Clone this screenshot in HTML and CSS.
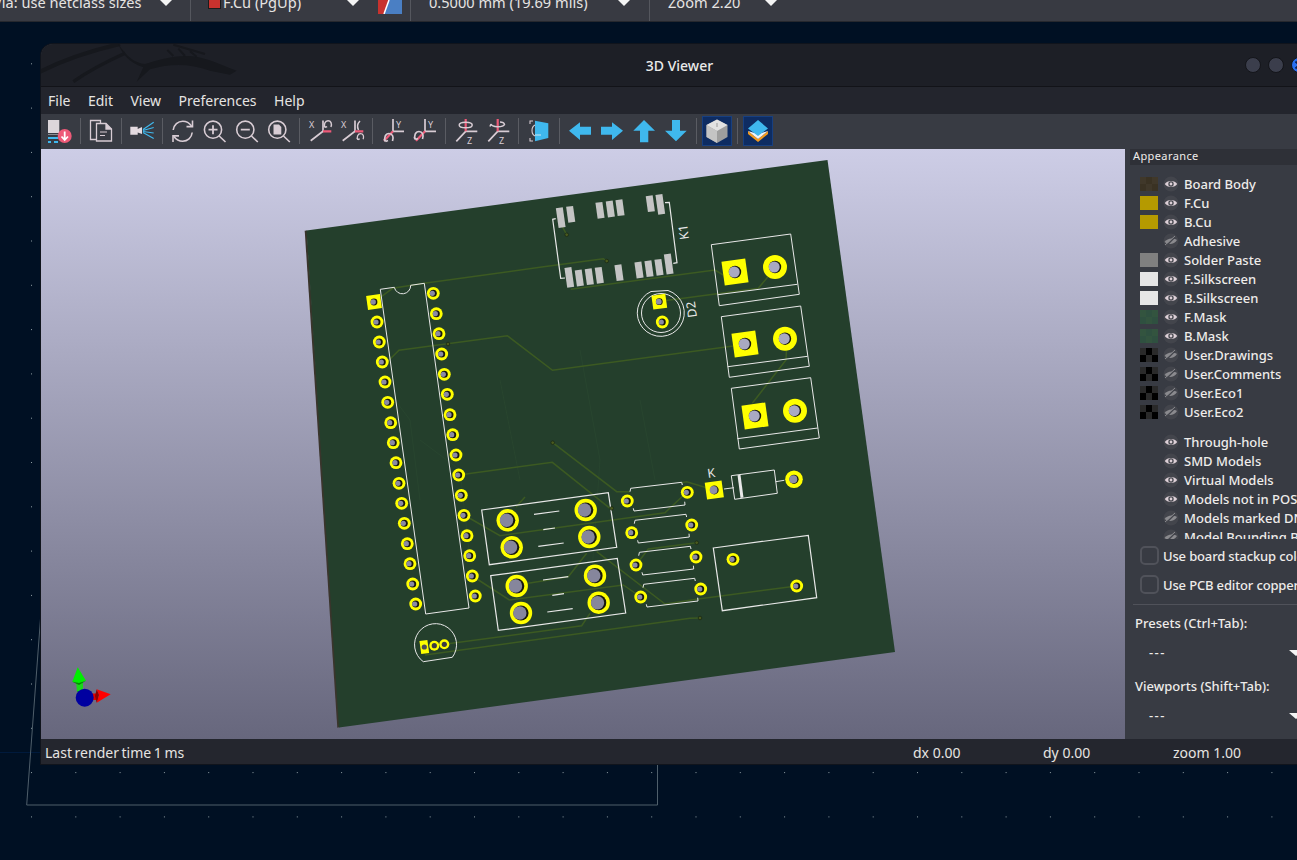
FILE: index.html

```html
<!DOCTYPE html>
<html lang="en">
<head>
  <meta charset="UTF-8" />
  <title>3D Viewer</title>
  <link rel="stylesheet" href="styles.css">
</head>
<body>

  <!-- shared symbols -->
  <svg class="defs" width="0" height="0">
    <symbol id="eye" viewBox="0 0 16 16">
      <circle cx="8" cy="8" r="7.5" fill="#43454c"/>
      <path d="M1.8 8C4 4 12 4 14.2 8 12 12 4 12 1.8 8Z" fill="#dccfd6"/>
      <circle cx="8" cy="8" r="2.7" fill="#43454c"/>
      <circle cx="8" cy="8" r="1.4" fill="#dccfd6"/>
    </symbol>
    <symbol id="eye-off" viewBox="0 0 16 16">
      <circle cx="8" cy="8" r="7.5" fill="#43454c"/>
      <path d="M1.5 9C4 5.2 10 4.4 14 7 11.5 11.5 5 12 1.5 9Z" fill="#8a8a8e"/>
      <path d="M3 13L13 3" stroke="#43454c" stroke-width="1.6"/>
      <path d="M2 12L12 3" stroke="#8a8a8e" stroke-width="1"/>
    </symbol>
    <symbol id="rot-arrow" viewBox="0 0 12 12" overflow="visible">
      <path d="M2.5 9.5C.5 6 2.5 1.5 6 1.5S11 5 9.5 9M2.5 9.5L1 7M2.5 9.5L5 8.5" fill="none" stroke="#d8ccd4" stroke-width="1.7"/>
    </symbol>
  </svg>

  <!-- pcb editor behind the viewer -->
  <svg class="backdrop" width="1297" height="860">
    <defs>
      <pattern id="griddots" x="31" y="19" width="44.3" height="44.3" patternUnits="userSpaceOnUse">
        <rect width="1" height="1" fill="#8f9ea4"/>
      </pattern>
    </defs>
    <rect width="1297" height="860" fill="url(#griddots)"/>
    <path d="M0 752.5H41" stroke="#001a3c" stroke-width="1"/>
    <path d="M41 612L26.7 805H657.5V764" fill="none" stroke="#4f5f6b" stroke-width="1"/>
  </svg>

  <div class="topbar">
    <div class="combo combo-via"><span>Via: use netclass sizes</span><i class="arrow"></i></div>
    <div class="combo combo-layer"><b class="layer-chip"></b><span>F.Cu (PgUp)</span><i class="arrow"></i></div>
    <svg class="layer-pair" width="24" height="14" viewBox="0 0 24 14">
      <rect width="24" height="14" fill="#4a7fc4"/>
      <path d="M0 0H11L6 14H0Z" fill="#c8322e"/>
      <path d="M11 0L6 14" stroke="#fff" stroke-width="1.5"/>
    </svg>
    <div class="combo combo-track"><span>0.5000 mm (19.69 mils)</span><i class="arrow"></i></div>
    <div class="combo combo-zoom"><span>Zoom 2.20</span><i class="arrow"></i></div>
  </div>

  <div class="window">
    <div class="titlebar">
      <svg class="dragon" width="230" height="50" viewBox="0 0 690 150">
        <path d="M30 95C110 55 190 30 270 12" fill="none" stroke="#16181d" stroke-width="12"/>
        <path d="M130 125C180 90 230 65 285 40" fill="none" stroke="#16181d" stroke-width="10"/>
        <path d="M265 12C290 50 315 70 345 72 380 62 420 48 470 48 520 48 560 70 620 92L600 104 540 92C480 70 420 70 360 88L320 125 340 82C300 70 275 40 265 12Z" fill="#16181d"/>
        <path d="M412 30L430 48M445 26L465 48M480 34L500 50M430 14L525 42" fill="none" stroke="#16181d" stroke-width="6"/>
      </svg>
      <span class="title">3D Viewer</span>
      <div class="controls">
        <i class="ctl"></i><i class="ctl"></i>
        <i class="ctl ctl-close">
          <svg width="14" height="14" viewBox="0 0 14 14"><path d="M3.5 3.5L10.5 10.5M10.5 3.5L3.5 10.5" stroke="#10204a" stroke-width="1.8"/></svg>
        </i>
      </div>
    </div>

    <div class="menubar">
      <span>File</span><span>Edit</span><span>View</span><span>Preferences</span><span>Help</span>
    </div>

    <div class="toolbar">
      <button class="tool">
        <svg viewBox="0 0 32 34">
          <path d="M4 6H15.3V19H4Z" fill="#dcd6da"/>
          <path d="M4 20H15.3V21H4Z" fill="#8a8a90"/>
          <path d="M4 23H14V25H4ZM4 27H7V29H4ZM10 27H14V29H10Z" fill="#3fb8ee"/>
          <circle cx="20.7" cy="22" r="7" fill="#ee5a78"/>
          <path d="M20.7 17.5V26M17.5 22.5L20.7 26 24 22.5" fill="none" stroke="#fff" stroke-width="1.8"/>
        </svg>
      </button>
      <i class="sep"></i>
      <button class="tool">
        <svg viewBox="0 0 32 34" fill="none" stroke="#d8ccd4" stroke-width="1.3">
          <path d="M11 25.5H5.5V6.5H15.5V9"/>
          <path d="M11.5 9.5H21L26.5 15V27H11.5Z"/>
          <path d="M21 9.5V15H26.5" fill="#d8ccd4"/>
          <path d="M15 18H22M15 21.5H20" stroke-width="1.1"/>
        </svg>
      </button>
      <i class="sep"></i>
      <button class="tool">
        <svg viewBox="0 0 32 34">
          <path d="M4.3 12.7H11.7V15L16 13V20L11.7 18.5V20.7H4.3Z" fill="#e4dae0"/>
          <path d="M17 15.5L27.7 8.3M17 16.5L27.7 13.5M17 17.5L27.7 19M17 18.5L27.7 24.5" stroke="#3fb8ee" stroke-width="1.2" fill="none"/>
        </svg>
      </button>
      <i class="sep"></i>
      <button class="tool">
        <svg viewBox="0 0 32 34" fill="none" stroke="#d8ccd4" stroke-width="1.6">
          <path d="M6.2 16C6.8 10.5 11 7.2 15.7 7.2 19.5 7.2 22.5 9 24.5 12M25.2 18.5C24.6 24 20.5 27.3 15.7 27.3 12 27.3 9 25.5 7 22.5"/>
          <path d="M25.5 6.5V12.6H19.5M6 28V21.9H12"/>
        </svg>
      </button>
      <button class="tool">
        <svg viewBox="0 0 32 34" fill="none" stroke="#d8ccd4" stroke-width="1.6">
          <circle cx="14" cy="15.7" r="8.6"/>
          <path d="M20.2 22L26.5 28"/>
          <path d="M14 11.2V20.2M9.5 15.7H18.5" stroke-width="1.8"/>
        </svg>
      </button>
      <button class="tool">
        <svg viewBox="0 0 32 34" fill="none" stroke="#d8ccd4" stroke-width="1.6">
          <circle cx="14.3" cy="15.7" r="8.6"/>
          <path d="M20.5 22L26.8 28"/>
          <path d="M9.8 15.7H18.8" stroke-width="1.8"/>
        </svg>
      </button>
      <button class="tool">
        <svg viewBox="0 0 32 34" fill="none" stroke="#d8ccd4" stroke-width="1.6">
          <circle cx="14.3" cy="15.7" r="8.6"/>
          <path d="M20.5 22L26.8 28"/>
          <path d="M10.5 10.5H16L18.3 13V20.5H10.5Z" fill="#d8ccd4" stroke="none"/>
        </svg>
      </button>
      <i class="sep"></i>
      <button class="tool">
        <svg viewBox="0 0 32 34" fill="none" stroke="#d8ccd4" stroke-width="1.7">
          <path d="M6.7 26.7L19 17.3V6.5"/>
          <path d="M19 17.3H27.3" stroke="#ee5a78" stroke-width="2.2"/>
          <text x="5" y="14" class="axis">X</text>
          <use href="#rot-arrow" x="19" y="5.5" width="10" height="10"/>
        </svg>
      </button>
      <button class="tool">
        <svg viewBox="0 0 32 34" fill="none" stroke="#d8ccd4" stroke-width="1.7">
          <path d="M6.7 26.7L19 17.3V6.5"/>
          <path d="M19 17.3H27.3" stroke="#ee5a78" stroke-width="2.2"/>
          <text x="5" y="14" class="axis">X</text>
          <use href="#rot-arrow" x="20" y="18.5" width="9" height="9"/>
          <path d="M24 7C21 10 21 13 22.5 16" stroke-width="1.5"/>
        </svg>
      </button>
      <i class="sep"></i>
      <button class="tool">
        <svg viewBox="0 0 32 34" fill="none" stroke="#d8ccd4" stroke-width="1.7">
          <path d="M16 5V17.3H27"/>
          <path d="M16 17.3L7 26.7" stroke="#ee5a78" stroke-width="2.2"/>
          <text x="19" y="14" class="axis">Y</text>
          <use href="#rot-arrow" x="6" y="18" width="12" height="12"/>
        </svg>
      </button>
      <button class="tool">
        <svg viewBox="0 0 32 34" fill="none" stroke="#d8ccd4" stroke-width="1.7">
          <path d="M16 5V17.3H27"/>
          <path d="M16 17.3L7 26.7" stroke="#ee5a78" stroke-width="2.2"/>
          <text x="19" y="14" class="axis">Y</text>
          <use href="#rot-arrow" x="4" y="16" width="12" height="12"/>
        </svg>
      </button>
      <i class="sep"></i>
      <button class="tool">
        <svg viewBox="0 0 32 34" fill="none" stroke="#d8ccd4" stroke-width="1.7">
          <path d="M6.3 27.3L15.7 17.3H27.3"/>
          <path d="M15.7 5V17.3" stroke="#ee5a78" stroke-width="2.2"/>
          <text x="17" y="30" class="axis">Z</text>
          <ellipse cx="15.7" cy="11" rx="6.5" ry="2.8" stroke-width="1.5"/>
        </svg>
      </button>
      <button class="tool">
        <svg viewBox="0 0 32 34" fill="none" stroke="#d8ccd4" stroke-width="1.7">
          <path d="M6.3 27.3L15.7 17.3H27.3"/>
          <path d="M15.7 5V17.3" stroke="#ee5a78" stroke-width="2.2"/>
          <text x="17" y="30" class="axis">Z</text>
          <path d="M9 10C10 13.5 21 13.5 22.5 10.5 22 8.5 19 8 18 8M9 10L8 12.5" stroke-width="1.5"/>
        </svg>
      </button>
      <i class="sep"></i>
      <button class="tool">
        <svg viewBox="0 0 32 34">
          <path d="M7 10V7H10M7 24V27H10" fill="none" stroke="#d8ccd4" stroke-width="1.1"/>
          <path d="M12 6.7L25.3 9.3V24L12 27.3Z" fill="#3fb8ee"/>
          <path d="M12 11C8 13 8 20 12 22" fill="none" stroke="#d8ccd4" stroke-width="1.1"/>
          <path d="M12 21H18" stroke="#cfeaf6" stroke-width="1"/>
        </svg>
      </button>
      <i class="sep"></i>
      <button class="tool">
        <svg viewBox="0 0 32 34"><path d="M5 16.7L16 8.3V12.7H27V20.7H16V26Z" fill="#3fb8ee"/></svg>
      </button>
      <button class="tool">
        <svg viewBox="0 0 32 34"><path d="M27 16.7L16 8.3V12.7H5V20.7H16V26Z" fill="#3fb8ee"/></svg>
      </button>
      <button class="tool">
        <svg viewBox="0 0 32 34"><path d="M16 6L27 16.7H20.3V28.3H12V16.7H5.3Z" fill="#3fb8ee"/></svg>
      </button>
      <button class="tool">
        <svg viewBox="0 0 32 34"><path d="M16 27.3L26.7 16.7H20V6H12V16.7H5Z" fill="#3fb8ee"/></svg>
      </button>
      <i class="sep"></i>
      <button class="tool tool-on">
        <svg viewBox="0 0 32 34">
          <path d="M16 5.5L26.5 11V23L16 29 5.5 23V11Z" fill="#9e9e9e"/>
          <path d="M16 5.5L26.5 11 16 17 5.5 11Z" fill="#e2e2e2"/>
          <path d="M5.5 11L16 17V29L5.5 23Z" fill="#c4c4c4"/>
          <path d="M16 9V13" stroke="#9a9a9a" stroke-width="1"/>
        </svg>
      </button>
      <i class="sep"></i>
      <button class="tool tool-on">
        <svg viewBox="0 0 32 34">
          <path d="M6 20L16 28 26 20V17L16 25 6 17Z" fill="#f29a1e"/>
          <path d="M6 17L16 25 26 17 16 20Z" fill="#f4f4f4"/>
          <path d="M16 6L26 14.5 16 22 6 14.5Z" fill="#3fb8ee"/>
        </svg>
      </button>
    </div>

    <div class="main">
      <div class="canvas">
        <svg class="scene" width="1084" height="590" viewBox="41 149 1084 590">
          <defs>
            <g id="pin">
              <circle r="6.4" fill="#ffff00"/>
              <circle r="3.5" fill="#17170f"/>
              <circle cx="-1" r="2.6" fill="#8a8aa4"/>
            </g>
            <g id="big">
              <circle r="11.2" fill="#ffff00"/>
              <circle r="7.6" fill="#17170f"/>
              <circle cx="-1.2" r="6.7" fill="#86869c"/>
            </g>
            <g id="tb-round">
              <circle r="12" fill="#ffff00"/>
              <circle r="6.2" fill="#17170f"/>
              <circle cx="-.8" r="5.5" fill="#a9a9c2"/>
            </g>
            <g id="tb-square">
              <rect x="-12" y="-12" width="24" height="24" fill="#ffff00" transform="rotate(-8)"/>
              <circle r="6.2" fill="#17170f"/>
              <circle cx="-.8" r="5.5" fill="#a9a9c2"/>
            </g>
            <circle id="via" r="1.8" fill="#4a5a1e" stroke="#1a2a14" stroke-width=".8"/>
            <rect id="smd" x="-3.5" y="-8" width="7" height="16" fill="#c4c4c4"/>
            <rect id="smd-long" x="-3.5" y="-10" width="7" height="20" fill="#c4c4c4"/>
            <g id="res-silk" fill="none" stroke="#e8e8e8" stroke-width="1">
              <path d="M630 491.7L630.7 488.3 681.7 482.3 682.3 485"/>
              <path d="M633.3 508.3L634 511 685 505 684.7 501.7"/>
            </g>
            <g id="sw-silk" fill="none" stroke="#e8e8e8" stroke-width="1.2">
              <path d="M481.7 510L608.3 492.7 616.7 547.3 489.3 564.7Z"/>
              <path d="M534 514.3L559.3 511M543.3 529.7L555 528M538.3 546.3L563.7 543"/>
            </g>
          </defs>

          <polygon points="304.7,230.7 307,230.4 340,727 337.3,727.7" fill="#3a352c"/>
          <polygon points="306.5,230.5 827.5,160 895,652 339,727.5" fill="#243f2c"/>

          <!-- back copper, barely visible -->
          <g fill="none" stroke="#28452f" stroke-width="1">
            <path d="M420 440L460 470 470 560"/>
            <path d="M580 350L600 460 590 600"/>
            <path d="M640 400L655 480"/>
            <path d="M500 380L520 480"/>
            <path d="M380 380L410 420 420 500"/>
          </g>

          <!-- front copper -->
          <g fill="none" stroke="#3c5a22" stroke-width="1.5">
            <path d="M374 302L392.7 288.3 424.3 283.3 540 267.3 603.3 258.7 606.7 261"/>
            <path d="M384 365L399 350.3 507.3 335.7 552.5 370.3 733.3 346"/>
            <path d="M570.7 289.3L715 270 723.3 275"/>
            <path d="M566.7 234.7L562 226"/>
            <path d="M662 301L683.3 298.3 758.3 288.3 772 272"/>
            <path d="M786.7 345L786 360 752.3 403.3"/>
            <path d="M552.7 442.7L616.7 491.7 630 491.7"/>
            <path d="M458.7 475L552.3 462.3 610 508.3"/>
            <path d="M464 515L500 535.7 665 512.7 687 492"/>
            <path d="M472.3 576L509.3 600 623.3 585 640.7 597"/>
            <path d="M586.7 553.3L568.3 576.7 528.3 583.3"/>
            <path d="M596.7 551.7L665 604 698.3 599 796.7 586"/>
            <path d="M444 644.3L581.7 625.7 590 613.3"/>
            <path d="M425 655L690 618.3 700 618"/>
            <path d="M636 565L648.3 549 696.7 542.7"/>
            <path d="M681.7 482.7L686.7 481.7 714 490"/>
            <path d="M516 507L525 497"/>
          </g>

          <!-- silkscreen -->
          <g fill="none" stroke="#e8e8e8" stroke-width="1">
            <path d="M394.3 287.3L380.3 289.3 425.7 614 469 608 424.3 283.3 410.7 285.3A8.3 8.3 0 0 1 394.3 287.3Z"/>
            <path d="M555.7 218.7L552.7 219.3 560.7 278.3 565 278" stroke-width="1.2"/>
            <path d="M665 202.7L669.3 202.3 677 262.7 673.3 263.3" stroke-width="1.2"/>
            <path d="M711.3 244.7L790.7 234 799.3 294.3 719.3 305.7ZM717.7 294.7L797.3 284.3"/>
            <path d="M721.3 316.7L800.7 306 809.3 366.3 729.3 377.3ZM727.7 366.7L807.7 356.3"/>
            <path d="M731.3 388.3L810.7 377.7 819.3 438 739.3 449ZM737.3 438.7L817.7 428"/>
            <path d="M651 291.5A23.5 23.5 0 1 0 668 290.5Z"/>
            <circle cx="661" cy="313" r="19.5"/>
            <path d="M713.3 548L808.3 535.3 816.7 597.7 722.3 610.7Z" stroke-width="1.2"/>
            <path d="M731.3 475.7L774.3 470 777.3 493.3 734.7 499.3Z"/>
            <path d="M724 489L734 487.7M775.7 481.7L784.3 480.3"/>
            <path d="M739 475L742 497.7" stroke-width="3"/>
            <path d="M423.3 661.7L452.3 657.3A21 21 0 1 0 423.3 661.7Z"/>
          </g>
          <use href="#res-silk"/>
          <use href="#res-silk" x="4.3" y="32"/>
          <use href="#res-silk" x="8.7" y="64"/>
          <use href="#res-silk" x="13" y="96"/>
          <use href="#sw-silk"/>
          <use href="#sw-silk" x="9" y="65.7"/>

          <text class="silk" transform="translate(689 239) rotate(-98)">K1</text>
          <text class="silk" transform="translate(697 317) rotate(-98)">D2</text>
          <text class="silk" transform="translate(708 478) rotate(-8)">K</text>

          <!-- relay pads -->
          <use href="#smd-long" transform="translate(560.7 217.7) rotate(-8)"/>
          <use href="#smd" transform="translate(570.7 214.3) rotate(-8)"/>
          <use href="#smd" transform="translate(600 210.3) rotate(-8)"/>
          <use href="#smd" transform="translate(610.3 209) rotate(-8)"/>
          <use href="#smd" transform="translate(620 207.7) rotate(-8)"/>
          <use href="#smd" transform="translate(650.3 203.7) rotate(-8)"/>
          <use href="#smd-long" transform="translate(660.3 204.3) rotate(-8)"/>
          <use href="#smd-long" transform="translate(569.3 277.3) rotate(-8)"/>
          <use href="#smd" transform="translate(579.3 278) rotate(-8)"/>
          <use href="#smd" transform="translate(589.3 276.7) rotate(-8)"/>
          <use href="#smd" transform="translate(599.3 275.3) rotate(-8)"/>
          <use href="#smd" transform="translate(619 272.7) rotate(-8)"/>
          <use href="#smd" transform="translate(639 270) rotate(-8)"/>
          <use href="#smd" transform="translate(649 268.7) rotate(-8)"/>
          <use href="#smd" transform="translate(659 267.3) rotate(-8)"/>
          <use href="#smd-long" transform="translate(668.7 264) rotate(-8)"/>

          <!-- IC pins -->
          <rect x="-7" y="-7" width="14" height="14" fill="#ffff00" transform="translate(374 302) rotate(-8)"/>
          <circle cx="374" cy="302" r="3.4" fill="#17170f"/><circle cx="373.2" cy="302" r="2.7" fill="#8a8aa4"/>
          <use href="#pin" x="377" y="322"/>
          <use href="#pin" x="379.3" y="342"/>
          <use href="#pin" x="382.3" y="362"/>
          <use href="#pin" x="385" y="382"/>
          <use href="#pin" x="387.7" y="402.3"/>
          <use href="#pin" x="390.7" y="422.7"/>
          <use href="#pin" x="393.3" y="442.7"/>
          <use href="#pin" x="396" y="462.7"/>
          <use href="#pin" x="399" y="483.3"/>
          <use href="#pin" x="401.7" y="503.3"/>
          <use href="#pin" x="404.3" y="523.3"/>
          <use href="#pin" x="407.3" y="543.7"/>
          <use href="#pin" x="410" y="563.7"/>
          <use href="#pin" x="412.7" y="584"/>
          <use href="#pin" x="415.7" y="604"/>
          <use href="#pin" x="433.3" y="293.3"/>
          <use href="#pin" x="436.3" y="313.7"/>
          <use href="#pin" x="439" y="333.7"/>
          <use href="#pin" x="441.7" y="354"/>
          <use href="#pin" x="444.3" y="374.3"/>
          <use href="#pin" x="447.3" y="394.3"/>
          <use href="#pin" x="450" y="414.7"/>
          <use href="#pin" x="452.7" y="434.7"/>
          <use href="#pin" x="456" y="455"/>
          <use href="#pin" x="458.7" y="475"/>
          <use href="#pin" x="461.3" y="495.3"/>
          <use href="#pin" x="464" y="515.3"/>
          <use href="#pin" x="467" y="535.7"/>
          <use href="#pin" x="469.7" y="555.7"/>
          <use href="#pin" x="472.3" y="576"/>
          <use href="#pin" x="475.3" y="596"/>

          <!-- terminal blocks -->
          <use href="#tb-square" x="735" y="272"/><use href="#tb-round" x="775" y="267"/>
          <use href="#tb-square" x="745" y="344"/><use href="#tb-round" x="785" y="338.7"/>
          <use href="#tb-square" x="755" y="416"/><use href="#tb-round" x="795" y="410.7"/>

          <!-- D2 -->
          <rect x="-7" y="-7" width="14" height="14" fill="#ffff00" transform="translate(659.3 301.7) rotate(-8)"/>
          <circle cx="659.3" cy="301.7" r="3.4" fill="#17170f"/><circle cx="658.8" cy="301.7" r="2.9" fill="#8e8ea8"/>
          <use href="#pin" x="662.3" y="322"/>

          <!-- switches -->
          <use href="#big" x="507.7" y="520.3"/><use href="#big" x="585.7" y="510"/>
          <use href="#big" x="511.7" y="547.3"/><use href="#big" x="589.3" y="537"/>
          <use href="#big" x="516.7" y="586"/><use href="#big" x="595" y="575.7"/>
          <use href="#big" x="521" y="613"/><use href="#big" x="598.7" y="602.7"/>

          <!-- resistors -->
          <use href="#pin" x="627.3" y="501"/><use href="#pin" x="687.3" y="492.3"/>
          <use href="#pin" x="631.7" y="532.7"/><use href="#pin" x="691.7" y="525"/>
          <use href="#pin" x="636" y="565"/><use href="#pin" x="696" y="557"/>
          <use href="#pin" x="640.7" y="597"/><use href="#pin" x="700.7" y="589"/>

          <!-- diode -->
          <rect x="-8.5" y="-8.5" width="17" height="17" fill="#ffff00" transform="translate(714.3 490) rotate(-8)"/>
          <circle cx="714.3" cy="490" r="4.4" fill="#17170f"/><circle cx="713.6" cy="490" r="3.9" fill="#8e8ea8"/>
          <circle cx="794" cy="479.3" r="8.8" fill="#ffff00"/>
          <circle cx="794" cy="479.3" r="4.6" fill="#17170f"/><circle cx="793.3" cy="479.3" r="4" fill="#8e8ea8"/>

          <!-- relay box pads -->
          <use href="#pin" x="733" y="559.3"/><use href="#pin" x="796.7" y="586"/>

          <!-- J1 -->
          <rect x="-4" y="-6.5" width="8" height="13" fill="#ffff00" transform="translate(424.3 647) rotate(-8)"/>
          <circle cx="424.3" cy="647" r="2.6" fill="#4c4c58"/>
          <circle cx="434.3" cy="645.7" r="5" fill="#ffff00"/><circle cx="434.3" cy="645.7" r="2.6" fill="#3a3a44"/>
          <circle cx="444.3" cy="644.3" r="5" fill="#ffff00"/><circle cx="444.3" cy="644.3" r="2.6" fill="#3a3a44"/>

          <use href="#via" x="566.7" y="234.7"/>
          <use href="#via" x="606.7" y="261"/>
          <use href="#via" x="552.7" y="442.7"/>
          <use href="#via" x="448" y="344"/>
          <use href="#via" x="611.7" y="508.3"/>
          <use href="#via" x="696.7" y="542.7"/>
          <use href="#via" x="700" y="618"/>

          <!-- axis gizmo -->
          <path d="M76 680H83L83 692 77 692Z" fill="#18d818"/>
          <path d="M77.7 667.3L86 680.7 79 683 72.3 681.7Z" fill="#00ee00"/>
          <path d="M72.3 681.7L79 683 86 680.7 79 685Z" fill="#008a00"/>
          <path d="M92 693.5H98V700H92Z" fill="#e00000"/>
          <path d="M96.7 689.3L110.7 694.3 96.7 702.7 99 695Z" fill="#ff0000"/>
          <path d="M96.7 689.3L99 695 96.7 702.7 95 696Z" fill="#900000"/>
          <circle cx="84.7" cy="697.7" r="9" fill="#0000a0"/>
        </svg>
      </div>

      <div class="panel">
        <div class="panel-tab">Appearance</div>
        <div class="layers">
          <div class="row"><i class="swatch sw-body"></i><svg class="eye"><use href="#eye"/></svg><span>Board Body</span></div>
          <div class="row"><i class="swatch sw-cu"></i><svg class="eye"><use href="#eye"/></svg><span>F.Cu</span></div>
          <div class="row"><i class="swatch sw-cu"></i><svg class="eye"><use href="#eye"/></svg><span>B.Cu</span></div>
          <div class="row"><i class="swatch"></i><svg class="eye"><use href="#eye-off"/></svg><span>Adhesive</span></div>
          <div class="row"><i class="swatch sw-paste"></i><svg class="eye"><use href="#eye"/></svg><span>Solder Paste</span></div>
          <div class="row"><i class="swatch sw-silk"></i><svg class="eye"><use href="#eye"/></svg><span>F.Silkscreen</span></div>
          <div class="row"><i class="swatch sw-silk"></i><svg class="eye"><use href="#eye"/></svg><span>B.Silkscreen</span></div>
          <div class="row"><i class="swatch sw-mask"></i><svg class="eye"><use href="#eye"/></svg><span>F.Mask</span></div>
          <div class="row"><i class="swatch sw-mask"></i><svg class="eye"><use href="#eye"/></svg><span>B.Mask</span></div>
          <div class="row"><i class="swatch sw-user"></i><svg class="eye"><use href="#eye-off"/></svg><span>User.Drawings</span></div>
          <div class="row"><i class="swatch sw-user"></i><svg class="eye"><use href="#eye-off"/></svg><span>User.Comments</span></div>
          <div class="row"><i class="swatch sw-user"></i><svg class="eye"><use href="#eye-off"/></svg><span>User.Eco1</span></div>
          <div class="row"><i class="swatch sw-user"></i><svg class="eye"><use href="#eye-off"/></svg><span>User.Eco2</span></div>
        </div>
        <div class="layers layers-models">
          <div class="row"><i class="swatch"></i><svg class="eye"><use href="#eye"/></svg><span>Through-hole</span></div>
          <div class="row"><i class="swatch"></i><svg class="eye"><use href="#eye"/></svg><span>SMD Models</span></div>
          <div class="row"><i class="swatch"></i><svg class="eye"><use href="#eye"/></svg><span>Virtual Models</span></div>
          <div class="row"><i class="swatch"></i><svg class="eye"><use href="#eye"/></svg><span>Models not in POS</span></div>
          <div class="row"><i class="swatch"></i><svg class="eye"><use href="#eye-off"/></svg><span>Models marked DNP</span></div>
          <div class="row"><i class="swatch"></i><svg class="eye"><use href="#eye-off"/></svg><span>Model Bounding Boxes</span></div>
        </div>
        <label class="check"><i class="box"></i>Use board stackup colors</label>
        <label class="check"><i class="box"></i>Use PCB editor copper colors</label>
        <div class="panel-sep"></div>
        <div class="panel-label">Presets (Ctrl+Tab):</div>
        <div class="panel-select"><span>---</span><i class="arrow"></i></div>
        <div class="panel-label">Viewports (Shift+Tab):</div>
        <div class="panel-select"><span>---</span><i class="arrow"></i></div>
      </div>
    </div>

    <div class="statusbar">
      <span class="st-main">Last render time 1 ms</span>
      <span class="st-cell">dx 0.00</span>
      <span class="st-cell">dy 0.00</span>
      <span class="st-cell">zoom 1.00</span>
    </div>
  </div>

</body>
</html>
```

FILE: styles.css

```css
html, body {
  height: 100%;
}
body {
  margin: 0;
  width: 1297px;
  height: 860px;
  overflow: hidden;
  position: relative;
  background-color: #001023;
  font-family: "Noto Sans", sans-serif;
  color: #e6e4e2;
}
.defs {
  position: absolute;
}
.backdrop {
  position: absolute;
  left: 0;
  top: 0;
}

/* pcb editor toolbar, cut off by the screen edge */
.topbar {
  position: relative;
  height: 21px;
  background-color: #383a42;
  border-bottom: 1px solid #26282e;
  display: flex;
  align-items: flex-start;
  overflow: hidden;
  font-size: 14.6px;
  line-height: 20px;
}
.combo {
  display: flex;
  align-items: flex-start;
  height: 21px;
  border-right: 1px solid #55575e;
  margin-top: -8px;
  padding-bottom: 8px;
  white-space: nowrap;
}
.combo .arrow {
  margin-top: 8px;
}
.arrow {
  width: 0;
  height: 0;
  border-left: 6px solid transparent;
  border-right: 6px solid transparent;
  border-top: 6px solid #f4f4f4;
}
.combo-via {
  margin-left: -7px;
  justify-content: space-between;
  padding-right: 18px;
  box-sizing: content-box;
  width: 179px;
}
.combo-layer {
  width: 147px;
  padding-left: 17px;
  border-right: none;
  position: relative;
}
.combo-layer .arrow {
  position: absolute;
  left: 156px;
}
.layer-chip {
  width: 13px;
  height: 17px;
  margin: 0 2px 0 0;
  background-color: #c8322e;
  border: 1px solid #1c1c1c;
  box-sizing: border-box;
}
.layer-pair {
  margin: 0 8px 0 23px;
  flex-shrink: 0;
}
.combo-track {
  width: 220px;
  padding-left: 18px;
  border-left: 1px solid #55575e;
  position: relative;
}
.combo-track .arrow {
  position: absolute;
  left: 207px;
}
.combo-zoom {
  width: 122px;
  padding-left: 18px;
  border-right: none;
  position: relative;
}
.combo-zoom .arrow {
  position: absolute;
  left: 115px;
}

/* 3D viewer window */
.window {
  position: absolute;
  left: 41px;
  top: 44px;
  width: 1277px;
  height: 720px;
  display: flex;
  flex-direction: column;
  background-color: #383b43;
  border-radius: 12px 12px 0 0;
  overflow: hidden;
  box-shadow: 0 0 0 1px #10141c;
}
.titlebar {
  position: relative;
  height: 43px;
  flex-shrink: 0;
  display: flex;
  align-items: center;
  justify-content: center;
  background-color: #1d1f26;
  border-bottom: 1px solid #121318;
  box-sizing: border-box;
}
.dragon {
  position: absolute;
  left: -11px;
  top: -4px;
}
.title {
  position: relative;
  font-size: 14px;
  font-weight: 500;
  color: #eaeaea;
}
.controls {
  position: absolute;
  right: 11px;
  top: 13px;
  display: flex;
  gap: 7px;
}
.ctl {
  width: 16px;
  height: 16px;
  border-radius: 50%;
  background-color: #3b3e4c;
  border: 1px solid #14151a;
  box-sizing: border-box;
  display: block;
}
.ctl-close {
  background-color: #2a6ff0;
}
.ctl-close svg {
  display: block;
}
.menubar {
  height: 27px;
  flex-shrink: 0;
  display: flex;
  align-items: center;
  gap: 17.5px;
  padding-left: 7px;
  font-size: 14px;
  background-color: #23252d;
}
.toolbar {
  height: 35px;
  flex-shrink: 0;
  display: flex;
  align-items: flex-start;
  padding-left: 3px;
  background-color: #383b43;
}
.tool {
  width: 32px;
  height: 34px;
  padding: 0;
  border: none;
  background: none;
  flex-shrink: 0;
  position: relative;
}
.tool svg {
  display: block;
  width: 32px;
  height: 34px;
}
.tool-on::before {
  content: "";
  position: absolute;
  left: 1px;
  top: 2px;
  width: 28px;
  height: 28px;
  background-color: #0e2c62;
  border: 1px solid #173f80;
}
.tool-on svg {
  position: relative;
}
.sep {
  width: 9px;
  height: 26px;
  margin-top: 4px;
  flex-shrink: 0;
  background: linear-gradient(#5a5c63, #5a5c63) center / 1px 100% no-repeat;
}
.axis {
  font-family: "Noto Sans", sans-serif;
  font-size: 9px;
  fill: #d8ccd4;
  stroke: none;
}

.main {
  flex: 1;
  display: flex;
  min-height: 0;
}
.canvas {
  width: 1084px;
  flex-shrink: 0;
  background: linear-gradient(#cdcde6, #67677d);
}
.scene {
  display: block;
}
.silk {
  font-family: "Noto Sans", sans-serif;
  font-size: 12.5px;
  fill: #e8e8e8;
}

/* appearance panel */
.panel {
  flex: 1;
  background-color: #383b43;
  overflow: hidden;
  white-space: nowrap;
  padding-left: 5px;
  color: #eeecea;
}
.panel-tab {
  height: 16px;
  background-color: #2e3037;
  font-size: 11px;
  line-height: 13px;
  padding-left: 3px;
  letter-spacing: .4px;
}
.layers {
  padding: 9px 0 0 10px;
}
.layers-models {
  height: 118px;
  overflow: hidden;
  padding-top: 11px;
  box-sizing: border-box;
  margin-bottom: 7px;
}
.row {
  height: 19px;
  display: flex;
  align-items: center;
  font-size: 13px;
  font-weight: 500;
}
.swatch {
  width: 18px;
  height: 14px;
  flex-shrink: 0;
}
.eye {
  width: 16px;
  height: 16px;
  margin-left: 5px;
  margin-right: 5px;
  flex-shrink: 0;
}
.sw-body {
  background: repeating-conic-gradient(#3a3223 0 25%, #40382a 0 50%) 0 0 / 12px 14px;
}
.sw-cu {
  background-color: #b59a00;
}
.sw-paste {
  background-color: #808080;
}
.sw-silk {
  background-color: #e6e6e6;
}
.sw-mask {
  background: repeating-conic-gradient(#2f5040 0 25%, #33543f 0 50%) 0 0 / 12px 14px;
}
.sw-user {
  background: repeating-conic-gradient(#000 0 25%, #2a2a2a 0 50%) 0 0 / 12px 14px;
}
.check {
  display: flex;
  align-items: center;
  height: 19px;
  margin: 0 0 10px 10px;
  font-size: 13px;
  font-weight: 500;
  letter-spacing: -.15px;
}
.box {
  width: 19px;
  height: 19px;
  margin-right: 4px;
  border: 2px solid #50525a;
  border-radius: 5px;
  box-sizing: border-box;
  flex-shrink: 0;
}
.panel-sep {
  height: 1px;
  margin: 0 0 9px 3px;
  background-color: #50525a;
}
.panel-label {
  height: 19px;
  line-height: 19px;
  padding-left: 5px;
  font-size: 13px;
  font-weight: 500;
}
.panel-select {
  height: 41px;
  margin-bottom: 3px;
  padding: 0 0 3px 19px;
  display: flex;
  align-items: center;
  justify-content: space-between;
  width: 173px;
  box-sizing: border-box;
  font-size: 13px;
  font-weight: 500;
  letter-spacing: 1.4px;
}
.panel-select .arrow {
  border-left-width: 7px;
  border-right-width: 7px;
  margin-top: 2px;
}

.statusbar {
  height: 25px;
  flex-shrink: 0;
  display: flex;
  align-items: center;
  font-size: 14px;
  padding: 1px 0 0 4px;
  box-sizing: border-box;
  background-color: #24262e;
}
.st-main {
  width: 868px;
  word-spacing: -1px;
}
.st-cell {
  width: 130px;
}
```
